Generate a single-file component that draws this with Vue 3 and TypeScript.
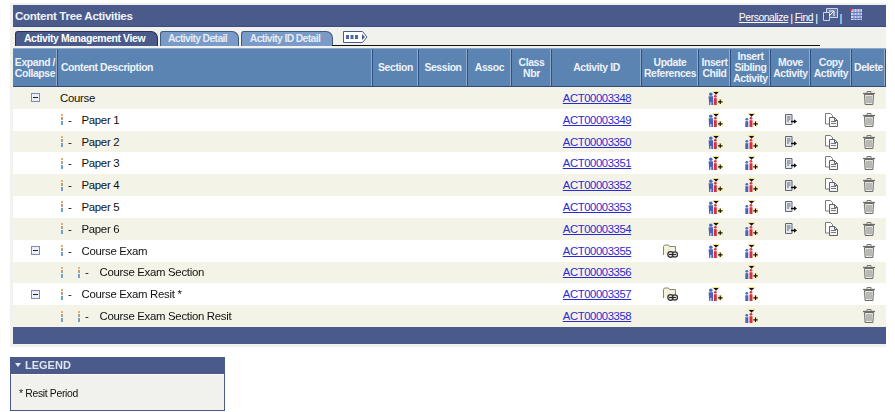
<script setup lang="ts">
interface Row {
  depth: number
  name: string
  id: string
  toggle?: boolean
  refs?: boolean
  child?: boolean
  sibling?: boolean
  moveCopy?: boolean
}

const headers: string[][] = [
  ['Expand /', 'Collapse'],
  ['Content Description'],
  ['Section'],
  ['Session'],
  ['Assoc'],
  ['Class', 'Nbr'],
  ['Activity ID'],
  ['Update', 'References'],
  ['Insert', 'Child'],
  ['Insert', 'Sibling', 'Activity'],
  ['Move', 'Activity'],
  ['Copy', 'Activity'],
  ['Delete'],
]

const papers: Row[] = [1, 2, 3, 4, 5, 6].map((n) => ({
  depth: 1,
  name: `Paper ${n}`,
  id: `ACT0000${3348 + n}`,
  child: true,
  sibling: true,
  moveCopy: true,
}))

const rows: Row[] = [
  { depth: 0, name: 'Course', id: 'ACT00003348', toggle: true, child: true },
  ...papers,
  { depth: 1, name: 'Course Exam', id: 'ACT00003355', toggle: true, refs: true, child: true, sibling: true },
  { depth: 2, name: 'Course Exam Section', id: 'ACT00003356', sibling: true },
  { depth: 1, name: 'Course Exam Resit *', id: 'ACT00003357', toggle: true, refs: true, child: true, sibling: true },
  { depth: 2, name: 'Course Exam Section Resit', id: 'ACT00003358', sibling: true },
]
</script>

<template>
  <div class="page">
    <svg class="defs" aria-hidden="true">
      <defs>
        <symbol id="dash" viewBox="0 0 2 11">
          <rect x="0" y="0" width="2" height="2" fill="#e8b070" />
          <rect x="0" y="3" width="2" height="3" fill="#b8a080" />
          <rect x="0" y="7" width="2" height="4" fill="#70a0d0" />
        </symbol>
        <symbol id="child" viewBox="0 0 15 14">
          <path d="M5 0.800h6l-3 3z" fill="#111" />
          <path d="M4.500 0h7v1h-7z" fill="#f2e27a" />
          <circle cx="2.800" cy="3.300" r="1.800" fill="#4a6fc0" />
          <path d="M.6 5.300h4.400v8.700H3.300v-3H2.400v3H1.200z" fill="#4a62b8" />
          <circle cx="7.300" cy="5.300" r="1.400" fill="#d83a48" />
          <path d="M5.800 7.200h3V14h-3z" fill="#d8303f" />
          <path d="M9.500 8h5.500v5.500H9.500z" fill="#fbf3b0" />
          <path d="M10 10.300h4.500v1.100H10zM11.700 8.600h1.100v4.500h-1.100z" fill="#111" />
        </symbol>
        <symbol id="sibling" viewBox="0 0 13 14">
          <path d="M3.500 0.800h6l-3 3z" fill="#111" />
          <path d="M3 0h7v1H3z" fill="#f2e27a" />
          <circle cx="1.800" cy="6.300" r="1.400" fill="#4a6fc0" />
          <path d="M.3 8.200h3V14h-3z" fill="#4a62b8" />
          <circle cx="6" cy="5.300" r="1.400" fill="#d83a48" />
          <path d="M4.500 7.200h3V14h-3z" fill="#d8303f" />
          <path d="M8 8h5v5.500H8z" fill="#fbf3b0" />
          <path d="M8.300 10.300h4.400v1.100H8.300zM10 8.600h1.100v4.500H10z" fill="#111" />
        </symbol>
        <symbol id="move" viewBox="0 0 12 11">
          <path d="M.5.5h6.500v10H.5z" fill="#e4e7ee" stroke="#5f6672" />
          <path d="M2 3h3.500M2 5h3.500M2 7h2" stroke="#5f6672" />
          <path d="M6 7.500h4" stroke="#111" stroke-width="1.500" />
          <path d="M9 5.200l3 2.300-3 2.300z" fill="#111" />
        </symbol>
        <symbol id="copy" viewBox="0 0 13 14">
          <path d="M.5.5h5l2 2v8.500h-7z" fill="#fff" stroke="#777c82" />
          <path d="M4.500 4.500h5l3 3v6h-8z" fill="#f4f4f2" stroke="#5f6469" />
          <path d="M6 8.500h5M6 10.500h5" stroke="#777c82" />
          <path d="M9.500 4.500v3h3" fill="none" stroke="#5f6469" />
        </symbol>
        <symbol id="trash" viewBox="0 0 12 14">
          <path d="M0 2.500h12" stroke="#6d6d6a" stroke-width="1.300" />
          <path d="M4 1.800V.5h4v1.300" fill="none" stroke="#777" />
          <path d="M1.500 3.500h9l-.6 10H2.100z" fill="#e6e6e2" stroke="#6c6c69" />
          <path d="M4 5v7M6 5v7M8 5v7" stroke="#8a8a86" />
        </symbol>
        <symbol id="refs" viewBox="0 0 15 14">
          <path d="M.5 11V2.500l1-1.500h4l1 1.500h6V8" fill="#f4f2da" stroke="#85857c" />
          <circle cx="7.600" cy="10.500" r="2.800" fill="#ddd" stroke="#333" stroke-width="1.300" />
          <circle cx="12" cy="10.500" r="2.600" fill="#ddd" stroke="#333" stroke-width="1.300" />
          <path d="M6 10.500h7" stroke="#222" />
        </symbol>
      </defs>
    </svg>

    <section class="panel">
      <header class="titlebar">
        <h1 class="title">Content Tree Activities</h1>
        <nav class="tools">
          <a class="tool-link">Personalize</a><span class="pipe">|</span>
          <a class="tool-link">Find</a><span class="pipe">|</span>
          <svg class="tool-icon" width="15" height="13" viewBox="0 0 15 13">
            <path d="M3.500.5h11v9h-11z" fill="#6577a5" stroke="#ccd4e6" />
            <path d="M.5 4.500h6v8h-6z" fill="#4a5a8a" stroke="#ccd4e6" />
            <path d="M6 3h5v5M11 3L6 8" fill="none" stroke="#fff" />
          </svg>
          <span class="pipe">|</span>
          <svg class="grid-icon" width="13" height="13" viewBox="0 0 13 13">
            <rect x="2" y="2" width="11" height="11" fill="#c9d0ee" />
            <path d="M2 5.500h11M2 8.500h11M2 11.500h11M5 2v11M8 2v11M11 2v11" stroke="#6f7cc0" />
            <path d="M0 0l4 3-2 1z" fill="#e0303a" />
          </svg>
        </nav>
      </header>

      <div class="tabbar">
        <span class="tab tab-active">Activity Management View</span>
        <span class="tab tab-plain tab-detail">Activity Detail</span>
        <span class="tab tab-plain tab-id">Activity ID Detail</span>
        <svg class="tab-more" width="25" height="12" viewBox="0 0 25 12">
          <path d="M.5.500h19l4.500 5.500-4.500 5.500H.5z" fill="#fff" stroke="#4a5a8a" />
          <path d="M3 4h3v4H3zM7.500 4h3v4h-3zM12 4h3v4h-3z" fill="#4a6aa0" />
          <path d="M19 3l3 3-3 3z" fill="#4a5a8a" />
        </svg>
        <span class="tab-line"></span>
      </div>

      <div class="table" role="table">
        <div class="grid head" role="row">
          <div v-for="(h, i) in headers" :key="i" class="hcell" :class="{ 'hcell-left': i === 1 }" role="columnheader">
            <span v-for="line in h" :key="line" class="hline">{{ line }}</span>
          </div>
        </div>
        <div v-for="row in rows" :key="row.id" class="grid row" role="row">
          <div class="cell center">
            <span v-if="row.toggle" class="toggle"></span>
          </div>
          <div class="cell desc">
            <template v-if="row.depth === 2">
              <svg class="dash" width="2" height="11"><use href="#dash" /></svg>
              <svg class="dash dash-second" width="2" height="11"><use href="#dash" /></svg>
              <span class="tick">-</span>
            </template>
            <template v-else-if="row.depth === 1">
              <svg class="dash" width="2" height="11"><use href="#dash" /></svg>
              <span class="tick">-</span>
            </template>
            <span :class="`name depth-${row.depth}`">{{ row.name }}</span>
          </div>
          <div class="cell"></div>
          <div class="cell"></div>
          <div class="cell"></div>
          <div class="cell"></div>
          <div class="cell center"><a class="act-link">{{ row.id }}</a></div>
          <div class="cell center">
            <svg v-if="row.refs" width="15" height="14"><use href="#refs" /></svg>
          </div>
          <div class="cell center">
            <svg v-if="row.child" width="15" height="14"><use href="#child" /></svg>
          </div>
          <div class="cell center">
            <svg v-if="row.sibling" width="13" height="14"><use href="#sibling" /></svg>
          </div>
          <div class="cell center">
            <svg v-if="row.moveCopy" width="12" height="11"><use href="#move" /></svg>
          </div>
          <div class="cell center">
            <svg v-if="row.moveCopy" width="13" height="14"><use href="#copy" /></svg>
          </div>
          <div class="cell center">
            <svg width="12" height="14"><use href="#trash" /></svg>
          </div>
        </div>
      </div>
      <div class="footbar"></div>
    </section>

    <aside class="legend">
      <div class="legend-head"><span class="legend-arrow"></span>LEGEND</div>
      <div class="legend-body">* Resit Period</div>
    </aside>
  </div>
</template>

<style scoped>
.page {
  width: 895px;
  height: 412px;
  padding: 3px 0 0 10px;
  box-sizing: border-box;
  overflow: hidden;
  font-family: "Liberation Sans", Arial, sans-serif;
  color: #111;
  filter: blur(0.3px);
}
.defs {
  display: block;
  width: 0;
  height: 0;
}
.panel {
  width: 876px;
  box-sizing: border-box;
  padding: 2px 0 3px 3px;
  background: #f1f2ed;
}
.titlebar {
  height: 22px;
  display: flex;
  align-items: center;
  justify-content: space-between;
  background: #4a5a8a;
  padding: 0 24px 0 2px;
  border-bottom: 1px solid #3f4d7c;
  box-sizing: border-box;
  color: #fff;
}
.title {
  margin: 0;
  font-size: 11.6px;
  letter-spacing: -0.33px;
  font-weight: bold;
  color: #f0f3f8;
}
.tools {
  display: flex;
  align-items: center;
  gap: 2px;
  font-size: 10.4px;
  letter-spacing: -0.44px;
  padding-top: 4px;
}
.tool-link {
  color: #fff;
  text-decoration: underline;
}
.pipe {
  color: #fff;
  font-size: 11px;
}
.tool-icon {
  margin: -7px 0 0 3px;
}
.grid-icon {
  margin: -8px 0 0 5px;
}
.tabbar {
  height: 21px;
  position: relative;
  display: flex;
  align-items: flex-end;
  padding-left: 2px;
  box-sizing: border-box;
  padding-bottom: 2px;
}
.tab-line {
  position: absolute;
  left: 319px;
  width: 488px;
  bottom: 2px;
  height: 1px;
  background: #111;
}
.tab {
  height: 15px;
  box-sizing: border-box;
  font-size: 10.4px;
  letter-spacing: -0.38px;
  font-weight: bold;
  line-height: 13px;
  text-align: center;
  padding-right: 4px;
  border-radius: 3px 7px 0 0;
  border: 1px solid #26324f;
  border-bottom: 0;
}
.tab-active {
  width: 143px;
  background: #4a5a8a;
  color: #fff;
}
.tab-plain {
  background: #7a9ac8;
  color: #e4ebf5;
  border-color: #3e5a80;
  letter-spacing: -0.65px;
}
.tab-detail {
  width: 79px;
  margin-left: 2px;
}
.tab-id {
  width: 92px;
  margin-left: 2px;
}
.tab-more {
  margin: 0 0 3px 10px;
}
.grid {
  display: grid;
  grid-template-columns: 45px 315px 46px 49px 44px 40px 90px 57px 32px 40px 40px 41px 34px;
}
.head {
  height: 39px;
  background: #5b84b3;
  border-bottom: 1px solid #2f4c7a;
  border-top: 1px solid #8fa8c8;
  box-sizing: border-box;
}
.hcell {
  display: flex;
  flex-direction: column;
  align-items: center;
  justify-content: center;
  box-sizing: border-box;
  border-right: 1px solid #2f5282;
  box-shadow: inset -1px 0 0 #8fabcb;
  color: #eef3f9;
  font-size: 10.4px;
  letter-spacing: -0.38px;
  font-weight: bold;
  line-height: 11px;
  text-align: center;
  white-space: nowrap;
}
.hcell-left {
  align-items: flex-start;
  padding-left: 3px;
}
.hline {
  display: block;
}
.row {
  height: 21.82px;
}
.row:nth-child(even) {
  background: #f3f3e7;
}
.row:nth-child(odd) {
  background: #fff;
}
.cell {
  display: flex;
  align-items: center;
  min-width: 0;
  font-size: 11.4px;
  letter-spacing: -0.3px;
}
.center {
  justify-content: center;
}
.toggle {
  position: relative;
  width: 9px;
  height: 9px;
  box-sizing: border-box;
  border: 1px solid #7a88c8;
  background: #eef0f8;
  margin-right: 1px;
}
.toggle::after {
  content: "";
  position: absolute;
  left: 1px;
  right: 1px;
  top: 3px;
  height: 1px;
  background: #222;
}
.desc {
  position: relative;
  padding-left: 2px;
  white-space: nowrap;
}
.dash {
  flex: none;
  margin-left: 1px;
}
.dash-second {
  margin-left: 15px;
}
.tick {
  margin-left: 5px;
}
.depth-1 {
  margin-left: 10px;
}
.depth-2 {
  margin-left: 11px;
}
.act-link {
  color: #2a2ad0;
  text-decoration: underline;
  font-size: 11.3px;
  letter-spacing: -0.4px;
}
.footbar {
  height: 17px;
  background: #4a5a8a;
}
.legend {
  width: 215px;
  margin-top: 10px;
  box-sizing: border-box;
  border: 1px solid #4a5a8a;
  border-top: 0;
  background: #f1f2ed;
  height: 54px;
}
.legend-head {
  height: 18px;
  background: #4a5a8a;
  border-bottom: 1px solid #fff;
  box-sizing: border-box;
  display: flex;
  align-items: center;
  color: #dfe5f0;
  font-size: 11px;
  font-weight: bold;
  padding-left: 4px;
}
.legend-arrow {
  width: 0;
  height: 0;
  border-left: 3px solid transparent;
  border-right: 3px solid transparent;
  border-top: 4px solid #e8ecf4;
  margin-right: 4px;
}
.legend-body {
  font-size: 10.4px;
  letter-spacing: -0.33px;
  padding: 13px 0 0 8px;
  line-height: 12px;
}
</style>
